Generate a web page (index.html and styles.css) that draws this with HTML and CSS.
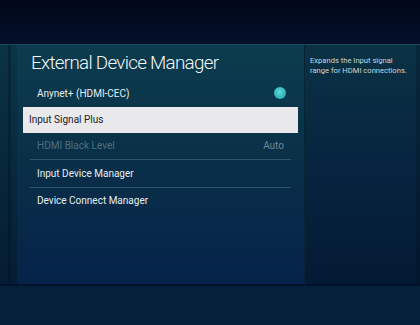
FILE: index.html
```html
<!doctype html>
<html lang="en">
  <head>
    <meta charset="UTF-8" />
    <meta name="viewport" content="width=device-width, initial-scale=1.0" />
    <title>External Device Manager</title>
    <link rel="stylesheet" href="styles.css">
  </head>
  <body>
    <div class="top"></div>

    <div class="screen">
      <div class="edge">
        <span class="edge-a"></span>
        <span class="edge-b"></span>
        <span class="edge-c"></span>
      </div>

      <div class="menu">
        <h1 class="title">External Device Manager</h1>
        <ul class="items">
          <li class="item">
            <span>Anynet+ (HDMI-CEC)</span>
            <span class="toggle"></span>
          </li>
          <li class="item selected">
            <span>Input Signal Plus</span>
          </li>
          <li class="item disabled line">
            <span>HDMI Black Level</span>
            <span class="value">Auto</span>
          </li>
          <li class="item line">
            <span>Input Device Manager</span>
          </li>
          <li class="item">
            <span>Device Connect Manager</span>
          </li>
        </ul>
      </div>

      <div class="help">
        <p>Expands the Input signal range for HDMI connections.</p>
      </div>

      <div class="edge-r"></div>
    </div>

    <div class="bottom"></div>
  </body>
</html>
```

FILE: styles.css
```css
body {
  margin: 0;
  background: #020a1e;
  font-family: Roboto, "Liberation Sans", sans-serif;
  color: #eef3f6;
  width: 420px;
  height: 325px;
  overflow: hidden;
}

.top {
  height: 44px;
  background: linear-gradient(#010718, #03102a);
}

.screen {
  display: flex;
  height: 240px;
  border-top: 1px solid #1d4a5c;
  box-sizing: border-box;
}

.edge {
  display: flex;
  width: 17px;
}

.edge-a {
  width: 8px;
  background: linear-gradient(#0a3344, #041c33);
}

.edge-b {
  width: 3px;
  background: linear-gradient(#072838, #03172c);
}

.edge-c {
  width: 6px;
  background: linear-gradient(#0b3547, #041d36);
}

.menu {
  width: 287px;
  background: linear-gradient(#0c3c4e, #0a3048 45%, #05234a);
  padding: 6px 0 0;
  box-sizing: border-box;
}

.title {
  margin: 0 0 5px 14px;
  font-size: 18.8px;
  font-weight: 300;
  line-height: 24px;
  letter-spacing: -0.7px;
  color: #f2f6f8;
}

.items {
  list-style: none;
  margin: 0;
  padding: 0 6px;
}

.item {
  display: flex;
  justify-content: space-between;
  align-items: center;
  height: 26.5px;
  padding: 0 14px;
  font-size: 10px;
  color: #e6edf1;
}

.item.line {
  border-bottom: 1px solid #2c5568;
  margin: 0 7px;
  padding: 0 7px;
}

.selected {
  background: #e9e9eb;
  color: #18212a;
  padding: 0 6px;
  height: 26px;
}

.disabled {
  color: #4c6f80;
}

.value {
  color: #6a8898;
}

.toggle {
  width: 12px;
  height: 12px;
  border-radius: 50%;
  background: radial-gradient(circle at 45% 40%, #5fd7d8, #2cb0b6 70%, #1f8f99);
  margin-right: -2px;
}

.help {
  width: 112px;
  background: linear-gradient(#0b3244, #062440 50%, #041a34);
  border-left: 1px solid #082433;
  box-sizing: border-box;
  padding: 11px 5px;
}

.help p {
  margin: 0;
  font-size: 7.6px;
  line-height: 10px;
  color: #c8d6de;
}

.edge-r {
  width: 4px;
  background: linear-gradient(#07283a, #03162e);
}

.bottom {
  height: 41px;
  border-top: 2px solid #021429;
  background: #04203a;
}
```
